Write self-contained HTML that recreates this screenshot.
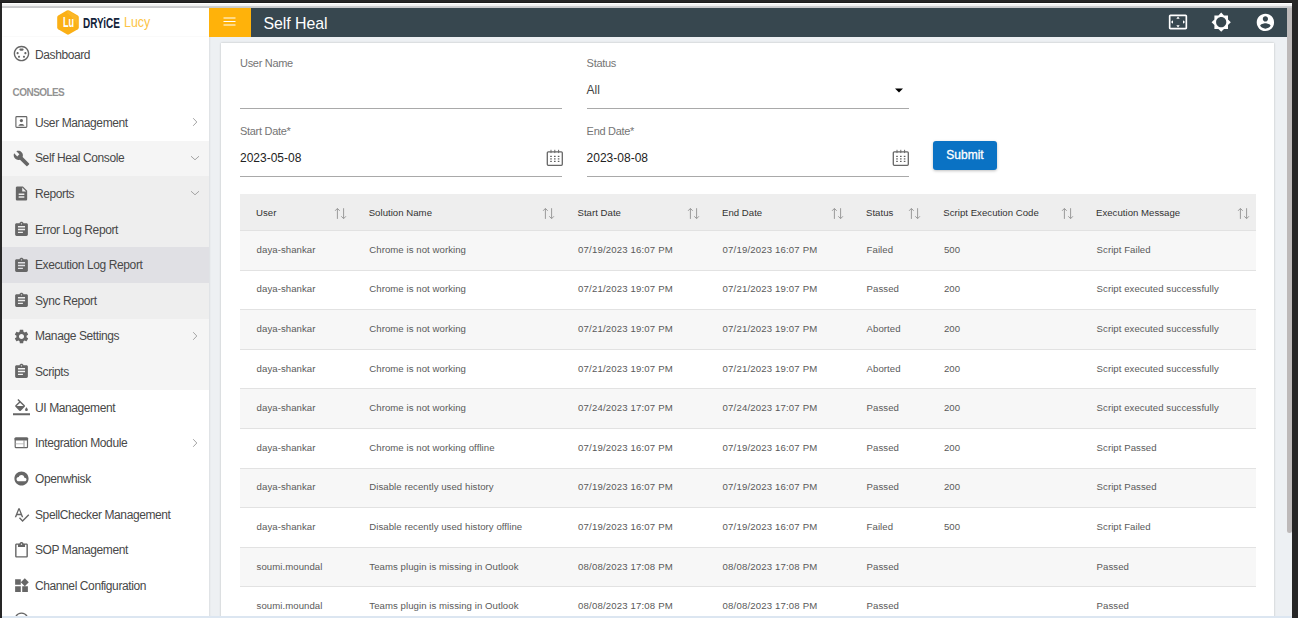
<!DOCTYPE html>
<html><head><meta charset="utf-8">
<style>
*{margin:0;padding:0;box-sizing:border-box}
html,body{width:1298px;height:618px;overflow:hidden;background:#262626;font-family:"Liberation Sans",sans-serif}
.a{position:absolute}
#top1{left:0;top:2px;width:1292px;height:1px;background:#1c1c1c}
#strip{left:2px;top:3px;width:1290px;height:5px;background:linear-gradient(#fff 0,#fff 1px,#f4f4f4 1px,#f1f1f1 3px,#d0d1d3 3px,#c6c7c9 5px)}
#side{left:2px;top:8px;width:207px;height:608px;background:#fff;overflow:hidden}
#logo{left:0;top:0;width:207px;height:28px;box-shadow:0 1px 3px rgba(0,0,0,.035)}
#hdr{left:209px;top:8px;width:1078px;height:29px;background:#37474f}
#ham{left:0;top:0;width:42px;height:29px;background:#ffb20a}
#content{left:209px;top:37px;width:1078px;height:579px;background:#edf0f3;box-shadow:inset 2px 0 2px -1px rgba(0,0,0,.07)}
#card{left:12px;top:6px;width:1053px;height:600px;background:#fff;box-shadow:0 0 2px rgba(0,0,0,.22)}
#sb{left:1287px;top:8px;width:5px;height:608px;background:#edf0f3}
#thumb{left:1287px;top:8px;width:5px;height:525px;background:#bdb9b9;border-radius:0 0 2.5px 2.5px}
#bottom{left:2px;top:616px;width:1290px;height:2px;background:#dce6f1}
.row{position:absolute;left:0;width:207px;height:36.2px;background:#fff}
.row .t{position:absolute;left:33px;top:0.8px;line-height:35.5px;font-size:12px;letter-spacing:-0.4px;color:#484848;white-space:nowrap}
.row svg.i{position:absolute;left:10.8px;top:9px;width:17px;height:17px;fill:#666}
.chev{position:absolute;left:186.8px;top:11px;width:12px;height:12px;fill:none;stroke:#a4a4a4;stroke-width:1}
.lbl{position:absolute;font-size:11px;color:#757575;letter-spacing:-0.3px;white-space:nowrap}
.val{position:absolute;font-size:12px;color:#222;white-space:nowrap}
.ul{position:absolute;height:1px;background:#a9a9a9}
table{position:absolute;left:19px;top:150.9px;border-collapse:collapse;table-layout:fixed;width:1015.5px}
th{height:36.6px;padding-top:1.5px !important;background:#eee;font-weight:normal;text-align:left;font-size:9.6px;color:#333;letter-spacing:0.03px;padding:0 0 0 16px;position:relative;white-space:nowrap}
td{height:39.6px;font-size:9.6px;color:#5a5a5a;letter-spacing:0.06px;padding:0 0 2px 16.6px;border-top:1px solid #e2e2e2;white-space:nowrap}
tr.g td{background:#f7f7f7}
td:nth-child(3),td:nth-child(4){letter-spacing:0.16px}
th svg{position:absolute;right:6px;top:13px;width:13px;height:13px;fill:none;stroke:#9a9a9a;stroke-width:1}
</style></head><body>
<div id="top1" class="a"></div>
<div id="strip" class="a"></div>

<div id="side" class="a">
  <div id="logo" class="a">
    <svg class="a" style="left:54.4px;top:1.3px" width="24" height="27" viewBox="0 0 24 27"><path d="M12 1.2 Q12.6 1.2 13.2 1.5 L21.8 6.6 Q22.8 7.2 22.8 8.4 V18.4 Q22.8 19.6 21.8 20.2 L13.2 25.3 Q12 26 10.8 25.3 L2.2 20.2 Q1.2 19.6 1.2 18.4 V8.4 Q1.2 7.2 2.2 6.6 L10.8 1.5 Q11.4 1.2 12 1.2Z" fill="#fbb016"/><path d="M12 1.8 L21.5 7.3 V17 Q18 9 11 4 Z" fill="#fdc54a" opacity=".35"/></svg>
    <div class="a" style="left:61.2px;top:6.8px;font-size:14.2px;font-weight:bold;color:#fff;transform:scaleX(.64);transform-origin:0 0;line-height:15px;letter-spacing:-0.2px">Lu</div>
    <div class="a" style="left:81px;top:7.3px;font-size:15.3px;font-weight:bold;color:#13233a;transform:scaleX(.65);transform-origin:0 0;line-height:16px">DRYiCE</div>
    <div class="a" style="left:121.7px;top:6.4px;font-size:15.5px;color:#fdc445;transform:scaleX(.80);transform-origin:0 0;line-height:16px">Lucy</div>
  </div>
  <!-- dashboard -->
  <div class="row" style="top:29px">
    <svg class="i" viewBox="0 0 24 24" style="top:8.1px"><path d="M8 11.5c0-.83-.67-1.5-1.5-1.5S5 10.67 5 11.5 5.67 13 6.5 13 8 12.33 8 11.5zm7-5c0-.83-.67-1.5-1.5-1.5h-3C9.67 5 9 5.67 9 6.5S9.67 8 10.5 8h3c.83 0 1.5-.67 1.5-1.5zM8.5 15c-.83 0-1.5.67-1.5 1.5S7.67 18 8.5 18s1.5-.67 1.5-1.5S9.33 15 8.5 15zM12 1C5.93 1 1 5.93 1 12s4.93 11 11 11 11-4.93 11-11S18.07 1 12 1zm0 20c-4.96 0-9-4.04-9-9s4.04-9 9-9 9 4.04 9 9-4.04 9-9 9zm5.5-11c-.83 0-1.5.67-1.5 1.5s.67 1.5 1.5 1.5 1.5-.67 1.5-1.5-.67-1.5-1.5-1.5zm-2 5c-.83 0-1.5.67-1.5 1.5s.67 1.5 1.5 1.5 1.5-.67 1.5-1.5-.67-1.5-1.5-1.5z"/></svg>
    <div class="t">Dashboard</div>
  </div>
  <div class="a" style="left:10.6px;top:78.9px;font-size:10px;font-weight:bold;color:#939393;letter-spacing:-0.56px">CONSOLES</div>
  <!-- rows -->
  <div class="row" style="top:97.20px">
    <svg class="i" viewBox="0 0 17 17" style="top:8.80px"><rect x="2.9" y="2.6" width="10.9" height="10.7" rx="0.8" fill="none" stroke="#666" stroke-width="1.15"/><circle cx="8.4" cy="6.6" r="1.6"/><path d="M5.4 11.7c.2-1.1 1.6-1.7 3-1.7s2.8.6 3 1.7z"/></svg>
    <div class="t" style="top:0.50px">User Management</div>
    <svg class="chev" style="top:11.00px" viewBox="0 0 12 12"><path d="M4.2 2.2 L7.8 6 L4.2 9.8"/></svg>
  </div>
  <div class="row" style="top:132.78px;background:#f5f5f5">
    <svg class="i" viewBox="0 0 24 24" style="top:8.85px"><path d="M22.7 19l-9.1-9.1c.9-2.3.4-5-1.5-6.9-2-2-5-2.4-7.4-1.3L9 6 6 9 1.6 4.7C.4 7.1.9 10.1 2.9 12.1c1.9 1.9 4.6 2.4 6.9 1.5l9.1 9.1c.4.4 1 .4 1.4 0l2.3-2.3c.5-.4.5-1.1.1-1.4z"/></svg>
    <div class="t" style="top:0.55px">Self Heal Console</div>
    <svg class="chev" style="top:11.05px" viewBox="0 0 12 12"><path d="M2 4.2 L6 7.8 L10 4.2"/></svg>
  </div>
  <div class="row" style="top:168.36px;background:#eee">
    <svg class="i" viewBox="0 0 24 24" style="top:8.89px"><path d="M14 2H6c-1.1 0-1.99.9-1.99 2L4 20c0 1.1.89 2 1.99 2H18c1.1 0 2-.9 2-2V8l-6-6zm2 16H8v-2h8v2zm0-4H8v-2h8v2zm-3-5V3.5L18.5 9H13z"/></svg>
    <div class="t" style="top:0.59px">Reports</div>
    <svg class="chev" style="top:11.09px" viewBox="0 0 12 12"><path d="M2 4.2 L6 7.8 L10 4.2"/></svg>
  </div>
  <div class="row" style="top:203.94px;background:#eee">
    <svg class="i" viewBox="0 0 24 24" style="top:8.94px"><path d="M19 3h-4.18C14.4 1.84 13.3 1 12 1c-1.3 0-2.4.84-2.82 2H5c-1.1 0-2 .9-2 2v14c0 1.1.9 2 2 2h14c1.1 0 2-.9 2-2V5c0-1.1-.9-2-2-2zm-7 0c.55 0 1 .45 1 1s-.45 1-1 1-1-.45-1-1 .45-1 1-1zm2 14H7v-2h7v2zm3-4H7v-2h10v2zm0-4H7V7h10v2z"/></svg>
    <div class="t" style="top:0.64px">Error Log Report</div>
  </div>
  <div class="row" style="top:239.0px;background:#e0e0e4">
    <svg class="i" viewBox="0 0 24 24" style="top:9.51px"><path d="M19 3h-4.18C14.4 1.84 13.3 1 12 1c-1.3 0-2.4.84-2.82 2H5c-1.1 0-2 .9-2 2v14c0 1.1.9 2 2 2h14c1.1 0 2-.9 2-2V5c0-1.1-.9-2-2-2zm-7 0c.55 0 1 .45 1 1s-.45 1-1 1-1-.45-1-1 .45-1 1-1zm2 14H7v-2h7v2zm3-4H7v-2h10v2zm0-4H7V7h10v2z"/></svg>
    <div class="t" style="top:1.21px">Execution Log Report</div>
  </div>
  <div class="row" style="top:275.10px;background:#eee">
    <svg class="i" viewBox="0 0 24 24" style="top:9.04px"><path d="M19 3h-4.18C14.4 1.84 13.3 1 12 1c-1.3 0-2.4.84-2.82 2H5c-1.1 0-2 .9-2 2v14c0 1.1.9 2 2 2h14c1.1 0 2-.9 2-2V5c0-1.1-.9-2-2-2zm-7 0c.55 0 1 .45 1 1s-.45 1-1 1-1-.45-1-1 .45-1 1-1zm2 14H7v-2h7v2zm3-4H7v-2h10v2zm0-4H7V7h10v2z"/></svg>
    <div class="t" style="top:0.73px">Sync Report</div>
  </div>
  <div class="row" style="top:310.68px;background:#f5f5f5">
    <svg class="i" viewBox="0 0 24 24" style="top:9.08px"><path d="M19.14 12.94c.04-.3.06-.61.06-.94 0-.32-.02-.64-.07-.94l2.03-1.58c.18-.14.23-.41.12-.61l-1.92-3.32c-.12-.22-.37-.29-.59-.22l-2.39.96c-.5-.38-1.03-.7-1.62-.94l-.36-2.54c-.04-.24-.24-.41-.48-.41h-3.84c-.24 0-.43.17-.47.41l-.36 2.540c-.59.24-1.13.57-1.62.94l-2.39-.96c-.22-.08-.47 0-.59.22L2.74 8.87c-.12.21-.08.47.12.61l2.03 1.58c-.05.3-.09.63-.09.94s.02.64.07.94l-2.030 1.58c-.18.14-.23.41-.12.61l1.92 3.32c.12.22.37.29.59.22l2.39-.96c.5.38 1.03.7 1.62.94l.36 2.54c.05.24.24.41.48.41h3.84c.24 0 .44-.17.47-.41l.36-2.54c.59-.24 1.13-.56 1.62-.94l2.39.96c.22.08.47 0 .59-.22l1.92-3.32c.12-.22.07-.47-.12-.61l-2.01-1.58zM12 15.6c-1.98 0-3.6-1.62-3.6-3.6s1.62-3.6 3.6-3.6 3.6 1.62 3.6 3.6-1.62 3.6-3.6 3.6z"/></svg>
    <div class="t" style="top:0.78px">Manage Settings</div>
    <svg class="chev" style="top:11.28px" viewBox="0 0 12 12"><path d="M4.2 2.2 L7.8 6 L4.2 9.8"/></svg>
  </div>
  <div class="row" style="top:346.26px;background:#f5f5f5">
    <svg class="i" viewBox="0 0 24 24" style="top:9.13px"><path d="M19 3h-4.18C14.4 1.84 13.3 1 12 1c-1.3 0-2.4.84-2.82 2H5c-1.1 0-2 .9-2 2v14c0 1.1.9 2 2 2h14c1.1 0 2-.9 2-2V5c0-1.1-.9-2-2-2zm-7 0c.55 0 1 .45 1 1s-.45 1-1 1-1-.45-1-1 .45-1 1-1zm2 14H7v-2h7v2zm3-4H7v-2h10v2zm0-4H7V7h10v2z"/></svg>
    <div class="t" style="top:0.83px">Scripts</div>
  </div>
  <div class="row" style="top:381.84px">
    <svg class="i" viewBox="0 0 24 24" style="top:9.18px"><path d="M16.56 8.94L7.62 0 6.21 1.41l2.38 2.38-5.15 5.15c-.59.59-.59 1.54 0 2.12l5.5 5.5c.29.29.68.44 1.06.44s.77-.15 1.06-.44l5.5-5.5c.59-.58.59-1.53 0-2.12zM5.21 10L10 5.21 14.79 10H5.21zM19 11.5s-2 2.17-2 3.5c0 1.1.9 2 2 2s2-.9 2-2c0-1.33-2-3.5-2-3.5zM0 20h24v3H0z"/></svg>
    <div class="t" style="top:0.88px">UI Management</div>
  </div>
  <div class="row" style="top:417.42px">
    <svg class="i" viewBox="0 0 17 17" style="top:9.22px"><rect x="2.2" y="3" width="12.3" height="9.7" rx="0.9" fill="none" stroke="#666" stroke-width="1.2"/><rect x="1.6" y="2.4" width="13.5" height="3" rx="0.9"/><path d="M2.6 8.8H10.6" stroke="#bbb" stroke-width="0.9"/><path d="M11 5.2V12.6" stroke="#888" stroke-width="0.9"/></svg>
    <div class="t" style="top:0.92px">Integration Module</div>
    <svg class="chev" style="top:11.42px" viewBox="0 0 12 12"><path d="M4.2 2.2 L7.8 6 L4.2 9.8"/></svg>
  </div>
  <div class="row" style="top:453.00px">
    <svg class="i" viewBox="0 0 24 24" style="top:9.27px"><path d="M12 2C6.47 2 2 6.47 2 12s4.47 10 10 10 10-4.47 10-10S17.53 2 12 2zm4.5 14H8c-1.66 0-3-1.34-3-3s1.34-3 3-3l.14.01C8.58 8.28 10.13 7 12 7c2.21 0 4 1.790 4 4h.5c1.38 0 2.5 1.12 2.5 2.5S17.88 16 16.5 16z"/></svg>
    <div class="t" style="top:0.97px">Openwhisk</div>
  </div>
  <div class="row" style="top:488.58px">
    <svg class="i" viewBox="0 0 24 24" style="top:9.32px"><path d="M12.45 16h2.09L9.43 3H7.57L2.46 16h2.09l1.12-3h5.64l1.14 3zm-6.02-5L8.5 5.48 10.57 11H6.43zm15.16.59l-8.09 8.09L9.83 16l-1.41 1.41 5.09 5.09L23 13l-1.41-1.41z"/></svg>
    <div class="t" style="top:1.02px">SpellChecker Management</div>
  </div>
  <div class="row" style="top:524.16px">
    <svg class="i" viewBox="0 0 24 24" style="top:9.36px"><path d="M19 2h-4.18C14.4.84 13.3 0 12 0S9.6.84 9.18 2H5c-1.1 0-2 .9-2 2v16c0 1.1.9 2 2 2h14c1.1 0 2-.9 2-2V4c0-1.1-.9-2-2-2zm-7 0c.55 0 1 .45 1 1s-.45 1-1 1-1-.45-1-1 .45-1 1-1zm7 18H5V4h2v3h10V4h2v16z"/></svg>
    <div class="t" style="top:1.06px">SOP Management</div>
  </div>
  <div class="row" style="top:559.74px">
    <svg class="i" viewBox="0 0 24 24" style="top:9.41px"><path d="M13 13v8h8v-8h-8zM3 21h8v-8H3v8zM3 3v8h8V3H3zm13.66-1.31L11 7.34 16.66 13l5.66-5.66-5.66-5.65z"/></svg>
    <div class="t" style="top:1.11px">Channel Configuration</div>
  </div>
  <div class="row" style="top:595.32px">
    <svg class="i" viewBox="0 0 24 24" style="top:7.6px"><path d="M12 2C6.48 2 2 6.48 2 12s4.48 10 10 10 10-4.48 10-10S17.52 2 12 2zm0 18c-4.41 0-8-3.59-8-8s3.59-8 8-8 8 3.59 8 8-3.59 8-8 8z"/></svg>
  </div>
</div>

<div id="hdr" class="a">
  <div id="ham" class="a">
    <svg class="a" style="left:14px;top:9.3px" width="13" height="9" viewBox="0 0 13 9"><path d="M0.5 1H12.5M0.5 4.5H12.5M0.5 8H12.5" stroke="#fff" stroke-width="1.2"/></svg>
  </div>
  <div class="a" style="left:54.6px;top:6.1px;font-size:15.9px;color:#fff;letter-spacing:-0.08px;line-height:19px">Self Heal</div>
  <svg class="a" style="left:958.8px;top:3.9px" width="20" height="20" viewBox="0 0 24 24" fill="#fff"><path d="M12.01 5.5L10 8h4l-1.99-2.5zM18 10v4l2.5-1.99L18 10zM6 10l-2.5 2.01L6 14v-4zm8 6h-4l2.01 2.5L14 16zm7-13H3c-1.1 0-2 .9-2 2v14c0 1.1.9 2 2 2h18c1.1 0 2-.9 2-2V5c0-1.1-.9-2-2-2zm0 16.01H3V4.99h18v14.02z"/></svg>
  <svg class="a" style="left:1002.2px;top:3.8px" width="20.4" height="20.4" viewBox="0 0 24 24" fill="#fff"><path d="M20 15.31L23.31 12 20 8.69V4h-4.69L12 .69 8.69 4H4v4.69L.69 12 4 15.31V20h4.69L12 23.31 15.31 20H20v-4.69zM12 18c-3.31 0-6-2.690-6-6s2.69-6 6-6 6 2.69 6 6-2.69 6-6 6z"/></svg>
  <svg class="a" style="left:1045.6px;top:4.4px" width="20.8" height="20.8" viewBox="0 0 24 24" fill="#fff"><path d="M12 2C6.48 2 2 6.48 2 12s4.48 10 10 10 10-4.48 10-10S17.52 2 12 2zm0 3c1.66 0 3 1.34 3 3s-1.34 3-3 3-3-1.34-3-3 1.34-3 3-3zm0 14.2c-2.5 0-4.71-1.28-6-3.22.03-1.99 4-3.08 6-3.080 1.99 0 5.97 1.09 6 3.08-1.29 1.940-3.5 3.22-6 3.22z"/></svg>
</div>

<div id="content" class="a">
  <div id="card" class="a">
    <!-- form -->
    <div class="lbl" style="left:19px;top:14px">User Name</div>
    <div class="ul" style="left:19px;top:65px;width:322px"></div>
    <div class="lbl" style="left:365.6px;top:14px">Status</div>
    <div class="val" style="left:365.6px;top:40px;color:#454545">All</div>
    <svg class="a" style="left:673.7px;top:45.3px" width="8" height="5" viewBox="0 0 8 5"><path d="M0 0.5H8L4 4.5Z" fill="#000"/></svg>
    <div class="ul" style="left:365.6px;top:65px;width:322.4px"></div>
    <div class="lbl" style="left:19px;top:82px">Start Date*</div>
    <div class="val" style="left:19px;top:107.5px">2023-05-08</div>
    <svg class="a" style="left:324.8px;top:106px" width="17" height="17" viewBox="0 0 17 17"><rect x="1.3" y="2.8" width="15" height="13.5" rx="1" fill="none" stroke="#666" stroke-width="1.3"/><path d="M5 0.8v3.3M8.8 0.8v3.3M12.6 0.8v3.3" stroke="#6a6a6a" stroke-width="1"/><g fill="#5e5e5e"><rect x="4.2" y="6.8" width="1.6" height="1.2"/><rect x="8" y="6.8" width="1.6" height="1.2"/><rect x="11.8" y="6.8" width="1.6" height="1.2"/><rect x="4.2" y="9.3" width="1.6" height="1.2"/><rect x="8" y="9.3" width="1.6" height="1.2"/><rect x="11.8" y="9.3" width="1.6" height="1.2"/><rect x="4.2" y="11.8" width="1.6" height="1.2"/><rect x="8" y="11.8" width="1.6" height="1.2"/><rect x="11.8" y="11.8" width="1.6" height="1.2"/></g></svg>
    <div class="ul" style="left:19px;top:133px;width:322px"></div>
    <div class="lbl" style="left:365.6px;top:82px">End Date*</div>
    <div class="val" style="left:365.6px;top:107.5px">2023-08-08</div>
    <svg class="a" style="left:671.4px;top:106px" width="17" height="17" viewBox="0 0 17 17"><rect x="1.3" y="2.8" width="15" height="13.5" rx="1" fill="none" stroke="#666" stroke-width="1.3"/><path d="M5 0.8v3.3M8.8 0.8v3.3M12.6 0.8v3.3" stroke="#6a6a6a" stroke-width="1"/><g fill="#5e5e5e"><rect x="4.2" y="6.8" width="1.6" height="1.2"/><rect x="8" y="6.8" width="1.6" height="1.2"/><rect x="11.8" y="6.8" width="1.6" height="1.2"/><rect x="4.2" y="9.3" width="1.6" height="1.2"/><rect x="8" y="9.3" width="1.6" height="1.2"/><rect x="11.8" y="9.3" width="1.6" height="1.2"/><rect x="4.2" y="11.8" width="1.6" height="1.2"/><rect x="8" y="11.8" width="1.6" height="1.2"/><rect x="11.8" y="11.8" width="1.6" height="1.2"/></g></svg>
    <div class="ul" style="left:365.6px;top:133px;width:322.4px"></div>
    <div class="a" style="left:712px;top:97.8px;width:64px;height:29.2px;background:#0a72c4;border-radius:3px;box-shadow:0 1px 3px rgba(0,0,0,.25);color:#fff;font-size:12px;-webkit-text-stroke:0.3px #fff;letter-spacing:0px;line-height:29px;text-align:center">Submit</div>

    <table>
      <colgroup><col style="width:112.7px"><col style="width:208.8px"><col style="width:144.5px"><col style="width:144px"><col style="width:77.3px"><col style="width:152.7px"><col style="width:175.5px"></colgroup>
      <tr><th>User<svg viewBox="0 0 13 13"><path d="M3.4 11.9V1.6M1.1 3.8L3.4 1.4 5.7 3.8M9.6 1.2V11.5M7.3 9.3L9.6 11.7 11.9 9.3"/></svg></th><th>Solution Name<svg viewBox="0 0 13 13"><path d="M3.4 11.9V1.6M1.1 3.8L3.4 1.4 5.7 3.8M9.6 1.2V11.5M7.3 9.3L9.6 11.7 11.9 9.3"/></svg></th><th>Start Date<svg viewBox="0 0 13 13"><path d="M3.4 11.9V1.6M1.1 3.8L3.4 1.4 5.7 3.8M9.6 1.2V11.5M7.3 9.3L9.6 11.7 11.9 9.3"/></svg></th><th>End Date<svg viewBox="0 0 13 13"><path d="M3.4 11.9V1.6M1.1 3.8L3.4 1.4 5.7 3.8M9.6 1.2V11.5M7.3 9.3L9.6 11.7 11.9 9.3"/></svg></th><th>Status<svg viewBox="0 0 13 13"><path d="M3.4 11.9V1.6M1.1 3.8L3.4 1.4 5.7 3.8M9.6 1.2V11.5M7.3 9.3L9.6 11.7 11.9 9.3"/></svg></th><th>Script Execution Code<svg viewBox="0 0 13 13"><path d="M3.4 11.9V1.6M1.1 3.8L3.4 1.4 5.7 3.8M9.6 1.2V11.5M7.3 9.3L9.6 11.7 11.9 9.3"/></svg></th><th>Execution Message<svg viewBox="0 0 13 13"><path d="M3.4 11.9V1.6M1.1 3.8L3.4 1.4 5.7 3.8M9.6 1.2V11.5M7.3 9.3L9.6 11.7 11.9 9.3"/></svg></th></tr>
      <tr class="g"><td>daya-shankar</td><td>Chrome is not working</td><td>07/19/2023 16:07 PM</td><td>07/19/2023 16:07 PM</td><td>Failed</td><td>500</td><td>Script Failed</td></tr>
      <tr><td>daya-shankar</td><td>Chrome is not working</td><td>07/21/2023 19:07 PM</td><td>07/21/2023 19:07 PM</td><td>Passed</td><td>200</td><td>Script executed successfully</td></tr>
      <tr class="g"><td>daya-shankar</td><td>Chrome is not working</td><td>07/21/2023 19:07 PM</td><td>07/21/2023 19:07 PM</td><td>Aborted</td><td>200</td><td>Script executed successfully</td></tr>
      <tr><td>daya-shankar</td><td>Chrome is not working</td><td>07/21/2023 19:07 PM</td><td>07/21/2023 19:07 PM</td><td>Aborted</td><td>200</td><td>Script executed successfully</td></tr>
      <tr class="g"><td>daya-shankar</td><td>Chrome is not working</td><td>07/24/2023 17:07 PM</td><td>07/24/2023 17:07 PM</td><td>Passed</td><td>200</td><td>Script executed successfully</td></tr>
      <tr><td>daya-shankar</td><td>Chrome is not working offline</td><td>07/19/2023 16:07 PM</td><td>07/19/2023 16:07 PM</td><td>Passed</td><td>200</td><td>Script Passed</td></tr>
      <tr class="g"><td>daya-shankar</td><td>Disable recently used history</td><td>07/19/2023 16:07 PM</td><td>07/19/2023 16:07 PM</td><td>Passed</td><td>200</td><td>Script Passed</td></tr>
      <tr><td>daya-shankar</td><td>Disable recently used history offline</td><td>07/19/2023 16:07 PM</td><td>07/19/2023 16:07 PM</td><td>Failed</td><td>500</td><td>Script Failed</td></tr>
      <tr class="g"><td>soumi.moundal</td><td>Teams plugin is missing in Outlook</td><td>08/08/2023 17:08 PM</td><td>08/08/2023 17:08 PM</td><td>Passed</td><td></td><td>Passed</td></tr>
      <tr><td>soumi.moundal</td><td>Teams plugin is missing in Outlook</td><td>08/08/2023 17:08 PM</td><td>08/08/2023 17:08 PM</td><td>Passed</td><td></td><td>Passed</td></tr>
    </table>
  </div>
</div>
<div id="sb" class="a"></div>
<div id="thumb" class="a"></div>
<div id="bottom" class="a"></div>
</body></html>
